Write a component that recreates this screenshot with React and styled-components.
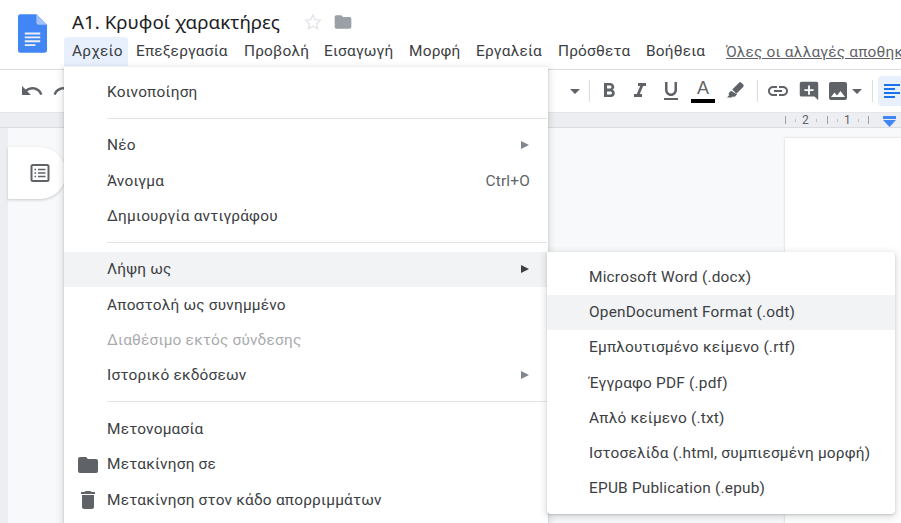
import React from "react";
import styled, { createGlobalStyle } from "styled-components";

const Global = createGlobalStyle`
  html, body { margin: 0; padding: 0; background: #fff; }
  body { font-family: Roboto, "Noto Sans", sans-serif; }
`;
const Page = styled.div`
  position: relative; width: 901px; height: 523px; overflow: hidden; background: #f8f9fa;
  display: flex; flex-direction: column;
`;
const Header = styled.header`
  height: 69px; background: #fff; border-bottom: 1px solid #dadce0; display: flex; box-sizing: content-box; flex: none;
`;
const LogoWrap = styled.div`
  width: 64px; flex: none; display: flex; justify-content: center; padding: 14px 0 0 0; box-sizing: border-box;
`;
const HeaderMain = styled.div`display: flex; flex-direction: column; min-width: 0; flex: 1; overflow: hidden;`;
const TitleRow = styled.div`
  height: 37px; display: flex; align-items: center; padding: 6px 0 0 8px; box-sizing: border-box; gap: 0;
`;
const Title = styled.span`
  font-family: "Noto Sans", sans-serif; font-size: 18.8px; color: #202124; white-space: nowrap; width: 231px;
`;
const TitleIcon = styled.svg`width: 20px; height: 20px; flex: none; margin-right: 10px;`;
const MenuBar = styled.nav`display: flex; align-items: center; height: 29px; white-space: nowrap;`;
const MenuItem = styled.span`
  font-size: 15.4px; letter-spacing: .21px; color: #3c4043; height: 29px; line-height: 29px; padding-left: 8px;
  box-sizing: border-box; flex: none; width: ${p => p.$w}px; border-radius: 4px 4px 0 0;
  background: ${p => (p.$active ? "#e8f0fe" : "transparent")};
`;
const Saved = styled.span`
  font-size: 15.4px; letter-spacing: .21px; color: #5f6368; text-decoration: underline; margin-left: 14px;
`;
const Toolbar = styled.div`
  height: 42px; background: #fff; display: flex; align-items: center; position: relative; flex: none;
  padding-left: 20px; box-sizing: border-box;
`;
const ToolIcon = styled.svg`
  width: 24px; height: 24px; flex: none; fill: #5f6368; margin-left: ${p => p.$ml || 0}px;
`;
const ToolGroup = styled.div`
  display: flex; align-items: center; margin-left: ${p => p.$ml}px; gap: ${p => p.$gap || 0}px;
`;
const Sep = styled.div`width: 1px; height: 22px; background: #dadce0; flex: none; margin-left: ${p => p.$ml}px;`;
const ColorA = styled.div`
  width: 24px; height: 26px; margin: 0 1px; display: flex; flex-direction: column; align-items: center; justify-content: flex-start;
  font-size: 18px; line-height: 20px; color: #5f6368; font-weight: 500; font-family: "Liberation Sans", sans-serif;
  &::after { content: ""; width: 24px; height: 4px; background: #000; margin-top: 1px; }
`;
const AlignBtn = styled.div`
  width: 30px; height: 30px; background: #e8f0fe; border-radius: 4px 0 0 4px; display: flex; align-items: center;
  justify-content: flex-start; padding-left: 5px; box-sizing: border-box; margin-left: 5px; flex: none;
`;
const RulerBar = styled.div`
  height: 14px; background: #eceef1; border-top: 1px solid #e3e5e8; border-bottom: 1px solid #dadce0;
  box-sizing: content-box; display: flex; justify-content: flex-end; align-items: center;
  position: relative; flex: none;
`;
const RulerSvg = styled.svg`width: 120px; height: 14px; flex: none;`;
const RulerNum = styled.span`
  position: absolute; top: 0; left: ${p => p.$x}px; font-size: 12px; line-height: 14px; color: #5f6368;
`;
const Canvas = styled.main`flex: 1; position: relative; display: flex;`;
const LeftStrip = styled.div`width: 8px; background: #eceef1; flex: none;`;
const OutlineTab = styled.div`
  position: absolute; left: 8px; top: 19px; width: 58px; height: 52px; background: #fff;
  border-radius: 0 26px 26px 0; box-shadow: 0 1px 3px rgba(60,64,67,.25);
  display: flex; align-items: center; padding-left: 20px; box-sizing: border-box;
`;
const DocSheet = styled.div`
  position: absolute; left: 785px; top: 10px; width: 116px; height: 400px; background: #fff;
  box-shadow: 0 0 2px rgba(60,64,67,.25);
`;
const Menu = styled.div`
  position: absolute; left: 64px; top: 67px; width: 484px; height: 470px; background: #fff; padding: 7px 0;
  box-sizing: border-box; box-shadow: 0 2px 6px 2px rgba(60,64,67,.15), 0 1px 2px rgba(60,64,67,.2);
`;
const Row = styled.div`
  height: 35.3px; display: flex; align-items: center; padding: 0 18px 0 43px; box-sizing: border-box; position: relative;
  font-size: 15.4px; letter-spacing: .21px; white-space: nowrap;
  color: ${p => (p.$disabled ? "#a9abae" : "#3c4043")};
  background: ${p => (p.$hover ? "#f1f3f4" : "transparent")};
`;
const Divider = styled.div`height: 1px; background: #e3e4e7; margin: 8.5px 1px 8.8px 43px;`;
const Shortcut = styled.span`margin-left: auto; color: #5f6368;`;
const Arrow = styled.span`
  margin-left: auto; margin-right: 1px; width: 0; height: 0; border-left: 8px solid ${p => (p.$dark ? "#3c4043" : "#80868b")};
  border-top: 4px solid transparent; border-bottom: 4px solid transparent;
`;
const RowIcon = styled.svg`position: absolute; left: 12px; top: 6px; width: 24px; height: 24px; fill: #5f6368;`;
const SubMenu = styled.div`
  position: absolute; left: 547px; top: 252px; width: 348px; height: 262px; background: #fff; padding: 7.5px 0; border-radius: 0 4px 4px 4px;
  box-sizing: border-box; box-shadow: 0 2px 6px 2px rgba(60,64,67,.15), 0 1px 2px rgba(60,64,67,.2);
`;
const SubRow = styled.div`
  height: 35.2px; display: flex; align-items: center; padding-left: 42px; font-size: 15.4px; letter-spacing: .21px; color: #3c4043;
  white-space: nowrap; background: ${p => (p.$hover ? "#f1f3f4" : "transparent")};
`;

const P = ({ d }) => <path d={d} />;

export default function App() {
  return (
    <Page>
      <Global />
      <Header>
        <LogoWrap>
          <svg width="29" height="39" viewBox="0 0 30 40">
            <path d="M2.5 0H19l11 11v26.5a2.5 2.5 0 0 1-2.5 2.5h-25A2.5 2.5 0 0 1 0 37.5v-35A2.5 2.5 0 0 1 2.5 0z" fill="#4285f4" />
            <path d="M19 0l11 11H21.5A2.5 2.5 0 0 1 19 8.5z" fill="#a1c2fa" />
            <path d="M7 19h16v2H7zM7 23h16v2H7zM7 27h16v2H7zM7 31h11v2H7z" fill="#f1f1f1" />
          </svg>
        </LogoWrap>
        <HeaderMain>
          <TitleRow>
            <Title>A1. Κρυφοί χαρακτήρες</Title>
            <TitleIcon viewBox="0 0 24 24" fill="none" stroke="#e3e4e7" strokeWidth="1.6">
              <path d="M12 3.5l2.6 5.6 6.1.7-4.5 4.2 1.2 6-5.4-3-5.4 3 1.2-6-4.5-4.2 6.1-.7z" />
            </TitleIcon>
            <TitleIcon viewBox="0 0 24 24" fill="#9aa0a6">
              <path d="M10 4H4a2 2 0 0 0-2 2v12a2 2 0 0 0 2 2h16a2 2 0 0 0 2-2V8a2 2 0 0 0-2-2h-8z" />
            </TitleIcon>
          </TitleRow>
          <MenuBar>
            <MenuItem $active $w={64}>Αρχείο</MenuItem>
            <MenuItem $w={108}>Επεξεργασία</MenuItem>
            <MenuItem $w={80}>Προβολή</MenuItem>
            <MenuItem $w={85}>Εισαγωγή</MenuItem>
            <MenuItem $w={67}>Μορφή</MenuItem>
            <MenuItem $w={82}>Εργαλεία</MenuItem>
            <MenuItem $w={88}>Πρόσθετα</MenuItem>
            <MenuItem $w={74}>Βοήθεια</MenuItem>
            <Saved>Όλες οι αλλαγές αποθηκ</Saved>
          </MenuBar>
        </HeaderMain>
      </Header>
      <Toolbar>
        <ToolIcon viewBox="0 0 24 24"><P d="M12.5 8c-2.65 0-5.05 1-6.9 2.6L2 7v9h9l-3.62-3.62c1.39-1.16 3.16-1.88 5.12-1.88 3.54 0 6.55 2.31 7.6 5.5l2.37-.78C21.08 11.03 17.15 8 12.5 8z" /></ToolIcon>
        <ToolIcon viewBox="0 0 24 24" $ml={8}><P d="M18.4 10.6C16.55 9 14.15 8 11.5 8c-4.65 0-8.58 3.03-9.96 7.22L3.9 16c1.05-3.19 4.05-5.5 7.6-5.5 1.95 0 3.73.72 5.12 1.88L13 16h9V7z" /></ToolIcon>
        <ToolGroup $ml={487}>
          <ToolIcon viewBox="0 0 24 24"><P d="M7 10l5 5 5-5z" /></ToolIcon>
        </ToolGroup>
        <Sep $ml={2} />
        <ToolGroup $ml={7} $gap={7}>
          <ToolIcon viewBox="0 0 24 24"><P d="M15.6 10.79c.97-.67 1.65-1.77 1.65-2.79 0-2.26-1.75-4-4-4H7v14h7.04c2.09 0 3.71-1.7 3.71-3.79 0-1.52-.86-2.82-2.15-3.42zM10 6.5h3c.83 0 1.5.67 1.5 1.5s-.67 1.5-1.5 1.5h-3v-3zm3.5 9H10v-3h3.5c.83 0 1.5.67 1.5 1.5s-.67 1.5-1.5 1.5z" /></ToolIcon>
          <ToolIcon viewBox="0 0 24 24"><P d="M10 4v3h2.21l-3.42 8H6v3h8v-3h-2.21l3.42-8H18V4z" /></ToolIcon>
          <ToolIcon viewBox="0 0 24 24"><P d="M12 17c3.31 0 6-2.69 6-6V3h-2.5v8c0 1.93-1.57 3.5-3.5 3.5S8.5 12.93 8.5 11V3H6v8c0 3.31 2.69 6 6 6zm-7 2v2h14v-2H5z" /></ToolIcon>
          <ColorA>A</ColorA>
          <ToolIcon viewBox="-3 -3 30 30"><P d="M18.5 1.15c-.53 0-1.05.2-1.46.59l-8.5 8.5 5.2 5.2 8.5-8.5c.8-.8.8-2.1 0-2.92l-2.28-2.28c-.4-.39-.93-.59-1.46-.59zM7.1 11.7l-2.7 2.7c-.6.6-.6 1.5 0 2.1l.4.4L2 20h6l1.4-1.4.4.4c.6.6 1.5.6 2.1 0l2.7-2.7z" /></ToolIcon>
        </ToolGroup>
        <Sep $ml={10} />
        <ToolGroup $ml={8} $gap={7}>
          <ToolIcon viewBox="0 0 24 24"><P d="M3.9 12c0-1.71 1.39-3.1 3.1-3.1h4V7H7c-2.76 0-5 2.24-5 5s2.24 5 5 5h4v-1.9H7c-1.71 0-3.1-1.39-3.1-3.1zM8 13h8v-2H8v2zm9-6h-4v1.9h4c1.71 0 3.1 1.39 3.1 3.1s-1.39 3.1-3.1 3.1h-4V17h4c2.76 0 5-2.24 5-5s-2.24-5-5-5z" /></ToolIcon>
          <ToolIcon viewBox="-1 -1 26 26"><P d="M4 2h16a2 2 0 0 1 2 2v18l-4-4H4a2 2 0 0 1-2-2V4a2 2 0 0 1 2-2zm7 4v4H7v2h4v4h2v-4h4v-2h-4V6z" /></ToolIcon>
          <ToolIcon viewBox="0 0 24 24" $ml={-2}><P d="M21 19V5c0-1.1-.9-2-2-2H5c-1.1 0-2 .9-2 2v14c0 1.1.9 2 2 2h14c1.1 0 2-.9 2-2zM8.5 13.5l2.5 3 3.5-4.5 4.5 6H5l3.5-4.5z" /></ToolIcon>
        </ToolGroup>
        <ToolIcon viewBox="0 0 24 24" $ml={-5}><P d="M7 10l5 5 5-5z" /></ToolIcon>
        <Sep $ml={3} />
        <AlignBtn>
          <svg width="18" height="18" viewBox="0 0 18 18" fill="#1a73e8">
            <path d="M1 2h16v2H1zM1 6h11v2H1zM1 10h16v2H1zM1 14h11v2H1z" />
          </svg>
        </AlignBtn>
      </Toolbar>
      <RulerBar>
        <RulerNum $x={802}>2</RulerNum>
        <RulerNum $x={844}>1</RulerNum>
        <RulerSvg viewBox="0 0 120 14">
          <path d="M4.5 3v8M46.5 3v8M87.5 3v8" stroke="#9aa0a6" strokeWidth="1" />
          <path d="M14.5 6v3M35.5 6v3M56.5 6v3M77.5 6v3" stroke="#bdc1c6" strokeWidth="1" />
          <path d="M102 3h13v3h-13z" fill="#4285f4" />
          <path d="M102 7h13l-6.5 7z" fill="#4285f4" />
        </RulerSvg>
      </RulerBar>
      <Canvas>
        <LeftStrip />
        <OutlineTab>
          <svg width="24" height="24" viewBox="0 0 24 24" fill="none" stroke="#5f6368" strokeWidth="2">
            <rect x="3.5" y="4" width="17" height="16" rx="1.5" />
            <path d="M10 8.5h7.5M10 12h7.5M10 15.5h7.5M6.5 8.5h1.6M6.5 12h1.6M6.5 15.5h1.6" strokeWidth="1.7" />
          </svg>
        </OutlineTab>
        <DocSheet />
      </Canvas>
      <Menu>
        <Row>Κοινοποίηση</Row>
        <Divider />
        <Row>Νέο<Arrow /></Row>
        <Row>Άνοιγμα<Shortcut>Ctrl+O</Shortcut></Row>
        <Row>Δημιουργία αντιγράφου</Row>
        <Divider />
        <Row $hover>Λήψη ως<Arrow $dark /></Row>
        <Row>Αποστολή ως συνημμένο</Row>
        <Row $disabled>Διαθέσιμο εκτός σύνδεσης</Row>
        <Row>Ιστορικό εκδόσεων<Arrow /></Row>
        <Divider />
        <Row>Μετονομασία</Row>
        <Row>
          <RowIcon viewBox="0 0 24 24"><P d="M10 4H4a2 2 0 0 0-2 2v12a2 2 0 0 0 2 2h16a2 2 0 0 0 2-2V8a2 2 0 0 0-2-2h-8z" /></RowIcon>
          Μετακίνηση σε
        </Row>
        <Row>
          <RowIcon viewBox="0 0 24 24"><P d="M6 19c0 1.1.9 2 2 2h8c1.1 0 2-.9 2-2V7H6v12zM19 4h-3.5l-1-1h-5l-1 1H5v2h14V4z" /></RowIcon>
          Μετακίνηση στον κάδο απορριμμάτων
        </Row>
      </Menu>
      <SubMenu>
        <SubRow>Microsoft Word (.docx)</SubRow>
        <SubRow $hover>OpenDocument Format (.odt)</SubRow>
        <SubRow>Εμπλουτισμένο κείμενο (.rtf)</SubRow>
        <SubRow>Έγγραφο PDF (.pdf)</SubRow>
        <SubRow>Απλό κείμενο (.txt)</SubRow>
        <SubRow>Ιστοσελίδα (.html, συμπιεσμένη μορφή)</SubRow>
        <SubRow>EPUB Publication (.epub)</SubRow>
      </SubMenu>
    </Page>
  );
}
